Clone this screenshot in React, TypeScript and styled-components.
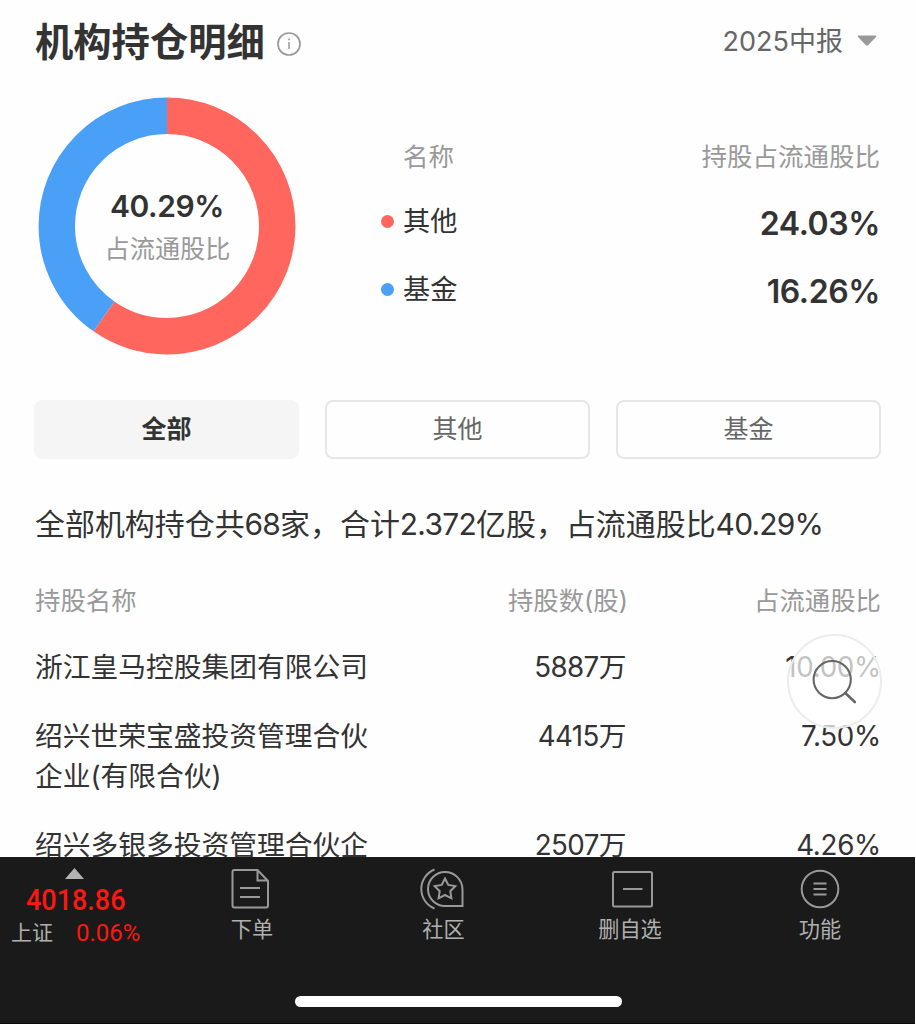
import React from "react";
import styled, { createGlobalStyle } from "styled-components";

const GlobalStyle = createGlobalStyle`
  * { box-sizing: border-box; }
  html, body { margin: 0; padding: 0; background: #fefefe; overflow: hidden; }
`;

const Screen = styled.div`
  position: relative;
  display: flex;
  flex-direction: column;
  width: 916px;
  height: 1024px;
  overflow: hidden;
  background: #fefefe;
  color: #333;
  font-family: Inter, "Noto Sans CJK SC", sans-serif;
  white-space: nowrap;
`;

const Content = styled.main`
  height: 857px;
  padding: 0 35px;
  overflow: hidden;
`;

const Header = styled.header`
  display: flex;
  justify-content: space-between;
  align-items: center;
  height: 84px;
`;

const TitleGroup = styled.div`
  display: flex;
  align-items: center;
  gap: 11px;
`;

const Title = styled.h1`
  margin: 0;
  font-size: 38.3px;
  line-height: 60px;
  font-weight: 700;
`;

const InfoIcon = styled.svg`
  display: block;
  margin-top: 3px;
`;

const Period = styled.div`
  display: flex;
  align-items: center;
  gap: 14px;
  padding-right: 4px;
  color: #666;
  font-size: 27px;
  line-height: 40px;
  svg { margin-top: -2px; }
`;

const Overview = styled.section`
  display: flex;
  height: 316px;
`;

const Donut = styled.div`
  display: grid;
  width: 264px;
  height: 284px;
  > * { grid-area: 1 / 1; }
`;

const DonutLabel = styled.div`
  display: flex;
  flex-direction: column;
  align-items: center;
  padding-top: 104px;
  z-index: 1;
`;

const DonutValue = styled.strong`
  font-size: 30px;
  line-height: 36px;
  font-weight: 600;
  letter-spacing: -0.4px;
`;

const DonutCaption = styled.span`
  margin: 8px 0 0 1px;
  font-size: 25.2px;
  line-height: 34px;
  color: #999;
`;

const Legend = styled.div`
  flex: 1;
  padding: 53px 1px 0 82px;
`;

const LegendHead = styled.div`
  display: flex;
  justify-content: space-between;
  padding-left: 22px;
  font-size: 25.5px;
  line-height: 40px;
  color: #999;
`;

const LegendRow = styled.div<{ $gap: number }>`
  display: flex;
  align-items: center;
  height: 40px;
  margin-top: ${(p) => p.$gap}px;
`;

const Dot = styled.i<{ $color: string }>`
  width: 13px;
  height: 13px;
  margin-right: 9px;
  border-radius: 50%;
  background: ${(p) => p.$color};
`;

const LegendName = styled.span`
  flex: 1;
  padding-top: 1px;
  font-size: 27.2px;
  line-height: 40px;
`;

const LegendValue = styled.strong`
  padding-top: 5px;
  font-size: 32px;
  line-height: 40px;
  font-weight: 600;
  letter-spacing: -0.4px;
`;

const Tabs = styled.nav`
  display: grid;
  grid-template-columns: repeat(3, 265px);
  gap: 26px;
  margin-left: -1px;
`;

const Tab = styled.button<{ $active?: boolean }>`
  height: 59px;
  padding: 0 0 1px;
  border: 2px solid ${(p) => (p.$active ? "#f5f5f5" : "#e6e6e6")};
  border-radius: 8px;
  background: ${(p) => (p.$active ? "#f5f5f5" : "#fefefe")};
  color: ${(p) => (p.$active ? "#333" : "#666")};
  font-family: inherit;
  font-size: 25px;
  line-height: 34px;
  font-weight: ${(p) => (p.$active ? 700 : 400)};
`;

const Summary = styled.p`
  margin: 45px 0 0;
  font-size: 29.95px;
  line-height: 40px;
`;

const Digits = styled.span<{ $spacing: number }>`
  letter-spacing: ${(p) => p.$spacing}px;
`;

const Row = styled.div`
  display: grid;
  grid-template-columns: 340px 251.5px 1fr;
  margin-top: 28px;
  font-size: 27.75px;
  line-height: 40.7px;
`;

const HeadRow = styled(Row)`
  grid-template-columns: 340px 253px 1fr;
  margin-top: 37px;
  margin-bottom: -2px;
  font-size: 25.4px;
  line-height: 40px;
  color: #999;
`;

const Cell = styled.span<{ $right?: boolean }>`
  text-align: ${(p) => (p.$right ? "right" : "left")};
`;

const SearchButton = styled.button`
  position: absolute;
  left: 787px;
  top: 634px;
  width: 95px;
  height: 95px;
  padding: 0;
  border: 2px solid #ececec;
  border-radius: 50%;
  background: rgba(255, 255, 255, 0.7);
  svg { display: block; }
`;

const BottomBar = styled.footer`
  position: relative;
  display: flex;
  flex-direction: column;
  align-items: center;
  width: 915px;
  height: 167px;
  background: #1a1a1a;
  border-bottom: 1px solid #090909;
  color: #b0b0b0;
`;

const BarItems = styled.div`
  display: grid;
  grid-template-columns: 156px 190px 193px 182px 194px;
  width: 100%;
  height: 138px;
`;

const IndexQuote = styled.div`
  display: flex;
  flex-direction: column;
  padding: 11px 0 0 11px;
`;

const UpArrow = styled.svg`
  display: block;
  margin-left: 54px;
`;

const IndexValue = styled.div`
  margin: 4px 0 0 15px;
  color: #ff1612;
  font-family: Roboto, sans-serif;
  font-size: 29.5px;
  line-height: 34px;
  font-weight: 500;
  transform: scaleX(0.915);
  transform-origin: left;
`;

const IndexLine = styled.div`
  display: flex;
  gap: 23px;
  align-items: center;
  font-size: 21px;
  line-height: 32px;
`;

const IndexChange = styled.span`
  color: #ff1612;
  font-family: Roboto, sans-serif;
  font-size: 24px;
`;

const BarItem = styled.div<{ $iconShift?: number; $labelShift?: number }>`
  display: flex;
  flex-direction: column;
  align-items: center;
  padding-top: 10px;
  padding-left: ${(p) => p.$labelShift ?? 0}px;
  font-size: 21.2px;
  line-height: 30px;
  svg {
    display: block;
    margin-bottom: 3px;
    margin-left: ${(p) => p.$iconShift ?? 0}px;
    fill: none;
    stroke: #999;
    stroke-width: 2;
  }
`;

const HomeIndicator = styled.div`
  width: 327px;
  height: 11px;
  margin: 1px 0 0 2px;
  border-radius: 6px;
  background: #fff;
`;

const RED = "#ff665e";
const BLUE = "#4a9ff7";

const holdings = [
  { lines: ["浙江皇马控股集团有限公司"], shares: "5887", ratio: "10.00%" },
  { lines: ["绍兴世荣宝盛投资管理合伙", "企业(有限合伙)"], shares: "4415", ratio: "7.50%" },
  { lines: ["绍兴多银多投资管理合伙企"], shares: "2507", ratio: "4.26%" },
];

function DonutChart() {
  const r = 110.2;
  const c = 2 * Math.PI * r;
  const red = c * (24.03 / 40.29);
  return (
    <svg width="264" height="284" viewBox="0 0 264 284" fill="none" strokeWidth="36.4">
      <g transform="rotate(-90 132 142)">
        <circle cx="132" cy="142" r={r} stroke={RED} strokeDasharray={`${red} ${c}`} />
        <circle cx="132" cy="142" r={r} stroke={BLUE} strokeDasharray={`${c - red} ${c}`} strokeDashoffset={-red} />
      </g>
    </svg>
  );
}

export default function App() {
  return (
    <Screen>
      <GlobalStyle />
      <Content>
        <Header>
          <TitleGroup>
            <Title>机构持仓明细</Title>
            <InfoIcon width="26" height="26" viewBox="0 0 26 26" fill="none">
              <circle cx="13" cy="13" r="11" stroke="#999" strokeWidth="1.7" />
              <path d="M13 11V18" stroke="#aaa" strokeWidth="1.8" />
              <circle cx="13" cy="8.4" r="1.1" fill="#aaa" />
            </InfoIcon>
          </TitleGroup>
          <Period>
            2025中报
            <svg width="20" height="12" viewBox="0 0 20 12">
              <path d="M1.4 0.5H18.6Q20 0.8 19 2L11.3 10Q10 11.2 8.7 10L1 2Q0 .8 1.4 .5Z" fill="#999" />
            </svg>
          </Period>
        </Header>

        <Overview>
          <Donut>
            <DonutChart />
            <DonutLabel>
              <DonutValue>40.29%</DonutValue>
              <DonutCaption>占流通股比</DonutCaption>
            </DonutLabel>
          </Donut>
          <Legend>
            <LegendHead>
              <span>名称</span>
              <span>持股占流通股比</span>
            </LegendHead>
            <LegendRow $gap={24}>
              <Dot $color={RED} />
              <LegendName>其他</LegendName>
              <LegendValue>24.03%</LegendValue>
            </LegendRow>
            <LegendRow $gap={28}>
              <Dot $color={BLUE} />
              <LegendName>基金</LegendName>
              <LegendValue>16.26%</LegendValue>
            </LegendRow>
          </Legend>
        </Overview>

        <Tabs>
          <Tab $active>全部</Tab>
          <Tab>其他</Tab>
          <Tab>基金</Tab>
        </Tabs>

        <Summary>
          全部机构持仓共<Digits $spacing={-0.8}>68</Digits>家，合计<Digits $spacing={-0.7}>2.372</Digits>
          亿股，占流通股比<Digits $spacing={-0.8}>40.29%</Digits>
        </Summary>

        <HeadRow>
          <Cell>持股名称</Cell>
          <Cell $right>持股数(股)</Cell>
          <Cell $right>占流通股比</Cell>
        </HeadRow>
        {holdings.map((h) => (
          <Row key={h.shares}>
            <Cell>
              {h.lines.map((line) => (
                <div key={line}>{line}</div>
              ))}
            </Cell>
            <Cell $right>
              <Digits $spacing={-0.6}>{h.shares}</Digits>万
            </Cell>
            <Cell $right>
              <Digits $spacing={-0.3}>{h.ratio}</Digits>
            </Cell>
          </Row>
        ))}
      </Content>

      <SearchButton aria-label="搜索">
        <svg width="91" height="91" viewBox="0 0 91 91" fill="none" stroke="#666" strokeWidth="2.1" strokeLinecap="round">
          <circle cx="43.2" cy="43.6" r="18.6" />
          <path d="M56.3 57L65.8 66" strokeWidth="2.6" />
        </svg>
      </SearchButton>

      <BottomBar>
        <BarItems>
          <IndexQuote>
            <UpArrow width="19" height="11" viewBox="0 0 19 11">
              <path d="M9.5 0L19 11H0Z" fill="#b3b3b3" />
            </UpArrow>
            <IndexValue>4018.86</IndexValue>
            <IndexLine>
              <span>上证</span>
              <IndexChange>0.06%</IndexChange>
            </IndexLine>
          </IndexQuote>
          <BarItem $labelShift={2} $iconShift={-4}>
            <svg width="44" height="44" viewBox="0 0 44 44">
              <path d="M6.5 3H29.5L40 14V38.5Q40 40.5 38 40.5H6.5Q4.5 40.5 4.5 38.5V5Q4.5 3 6.5 3M29.5 3V13.5H40" />
              <path d="M12 21H32M12 30H32" />
            </svg>
            下单
          </BarItem>
          <BarItem $labelShift={2} $iconShift={-4}>
            <svg width="44" height="44" viewBox="0 0 44 44">
              <path d="M14.5 2.5A21 21 0 0 0 14.5 41.5" />
              <path d="M25 5A17 17 0 0 0 25 39H42.5V22.5A17.5 17.5 0 0 0 25 5Z" />
              <path d="M25 11.5L28.3 17.9L35.3 19.1L30.3 24.2L31.4 31.3L25 28L18.6 31.3L19.7 24.2L14.7 19.1L21.7 17.9Z" />
            </svg>
            社区
          </BarItem>
          <BarItem $iconShift={4}>
            <svg width="44" height="44" viewBox="0 0 44 44">
              <rect x="3" y="5" width="39" height="34.5" rx="1.5" />
              <path d="M13 22H32.5" />
            </svg>
            删自选
          </BarItem>
          <BarItem $labelShift={4}>
            <svg width="44" height="44" viewBox="0 0 44 44">
              <circle cx="22" cy="22" r="18.3" />
              <path d="M15.5 16.5H28.5M15.5 22H28.5M15.5 27.5H28.5" />
            </svg>
            功能
          </BarItem>
        </BarItems>
        <HomeIndicator />
      </BottomBar>
    </Screen>
  );
}
